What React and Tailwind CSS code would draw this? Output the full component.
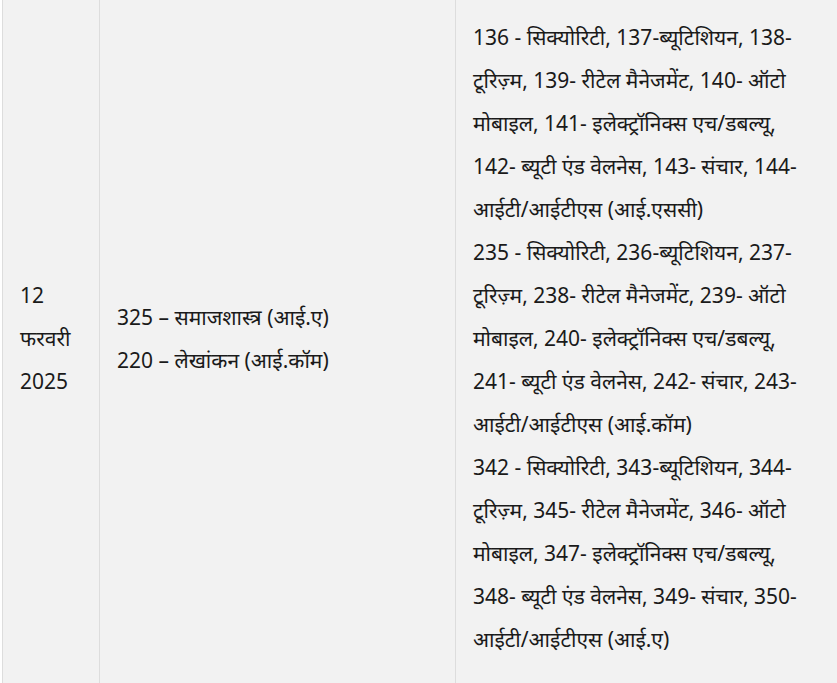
import React from 'react';

// each block is split into the lines the reference wraps at
const blocks = [
  [
    '136 - सिक्योरिटी, 137-ब्यूटिशियन, 138-',
    'टूरिज़्म, 139- रीटेल मैनेजमेंट, 140- ऑटो',
    'मोबाइल, 141- इलेक्ट्रॉनिक्स एच/डबल्यू,',
    '142- ब्यूटी एंड वेलनेस, 143- संचार, 144-',
    'आईटी/आईटीएस (आई.एससी)',
  ],
  [
    '235 - सिक्योरिटी, 236-ब्यूटिशियन, 237-',
    'टूरिज़्म, 238- रीटेल मैनेजमेंट, 239- ऑटो',
    'मोबाइल, 240- इलेक्ट्रॉनिक्स एच/डबल्यू,',
    '241- ब्यूटी एंड वेलनेस, 242- संचार, 243-',
    'आईटी/आईटीएस (आई.कॉम)',
  ],
  [
    '342 - सिक्योरिटी, 343-ब्यूटिशियन, 344-',
    'टूरिज़्म, 345- रीटेल मैनेजमेंट, 346- ऑटो',
    'मोबाइल, 347- इलेक्ट्रॉनिक्स एच/डबल्यू,',
    '348- ब्यूटी एंड वेलनेस, 349- संचार, 350-',
    'आईटी/आईटीएस (आई.ए)',
  ],
];

function App() {
  return (
    <div className="w-[837px] h-[683px] overflow-hidden bg-white pl-[2px]">
      <table
        className="-mt-[9px] w-[900px] table-fixed border-collapse bg-[#f2f2f2] text-[21px] leading-[43px] text-[#1a1a1a]"
        style={{ fontFamily: '"Noto Sans", "Open Sans", sans-serif' }}
      >
        <tbody>
          <tr>
            <td className="w-[97px] border border-[#dddddd] px-[17px] py-[24px] align-middle">
              <p>12</p>
              <p>फरवरी</p>
              <p>2025</p>
            </td>
            <td className="w-[356px] border border-[#dddddd] px-[17px] py-[24px] align-middle whitespace-nowrap">
              <p>325 – समाजशास्त्र (आई.ए)</p>
              <p>220 – लेखांकन (आई.कॉम)</p>
            </td>
            <td className="w-[447px] border border-[#dddddd] px-[17px] py-[24px] align-middle whitespace-nowrap">
              {blocks.map((lines, i) => (
                <p key={i}>
                  {lines.map((l, j) => (
                    <span key={j} className="block">{l}</span>
                  ))}
                </p>
              ))}
            </td>
          </tr>
        </tbody>
      </table>
    </div>
  );
}

export default App;
